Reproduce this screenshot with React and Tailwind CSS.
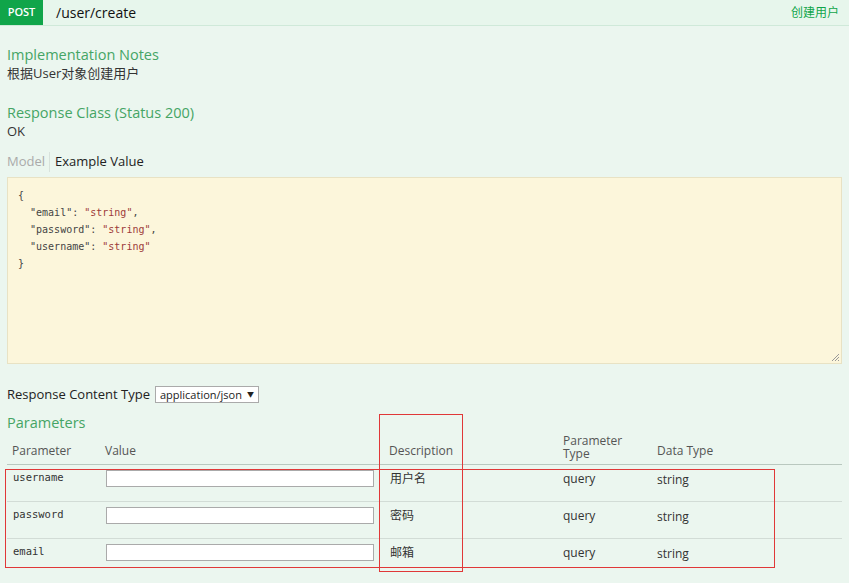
import React from "react"

const font = { fontFamily: '"Open Sans", "Noto Sans CJK SC", sans-serif' }

const params = [
    { name: "username", desc: "用户名" },
    { name: "password", desc: "密码" },
    { name: "email", desc: "邮箱" },
]

function Str({ children }) {
    return <span className="text-[#9c3a3a]">{children}</span>
}

export default function App() {
    return (
        <div className="relative w-[849px] h-[583px] overflow-hidden bg-[#ebf6ef] text-[#222]" style={font}>
            {/* header bar */}
            <div className="flex items-center h-[26px] bg-[#e7f6ec] border-b border-[#cfe9d9]">
                <div className="flex items-center justify-center w-[43px] h-[25px] bg-[#10a54a] text-white text-[11px] font-semibold">POST</div>
                <div className="ml-[13px] text-[14px] text-[#111]">/user/create</div>
                <div className="ml-auto mr-[10px] text-[12px] text-[#10a54a]">创建用户</div>
            </div>

            <div className="px-[7px]">
                <div className="mt-[19px] text-[14.5px] leading-[20px] text-[#45a565]">Implementation Notes</div>
                <div className="text-[13px] leading-[16px] text-[#333]">根据User对象创建用户</div>

                <div className="mt-[22px] text-[14.5px] leading-[20px] text-[#45a565]">Response Class (Status 200)</div>
                <div className="text-[13px] leading-[17px] text-[#333]">OK</div>

                <div className="flex items-center mt-[12px] h-[20px] text-[13px]">
                    <span className="text-[#aaa] pr-[4px]">Model</span>
                    <span className="h-[20px] border-l border-[#d8e2dc]"></span>
                    <span className="pl-[5px] text-[#222]">Example Value</span>
                </div>

                {/* example value box */}
                <div className="relative mt-[5px] h-[187px] bg-[#fcf6db] border border-[#e8e2c4]">
                    <pre className="pt-[9px] pl-[10px] text-[10px] leading-[17px] text-[#444]" style={{ fontFamily: '"DejaVu Sans Mono", monospace' }}>
{"{\n"}
{"  \"email\": "}<Str>"string"</Str>{",\n"}
{"  \"password\": "}<Str>"string"</Str>{",\n"}
{"  \"username\": "}<Str>"string"</Str>{"\n"}
{"}"}
                    </pre>
                    <svg className="absolute right-[1px] bottom-[1px]" width="9" height="9" viewBox="0 0 9 9">
                        <path d="M8 1 L1 8 M8 4 L4 8 M8 7 L7 8" stroke="#999" strokeWidth="1" />
                    </svg>
                </div>

                <div className="flex items-center mt-[21px] text-[13px]">
                    <span>Response Content Type</span>
                    <div className="ml-[5px] flex items-center h-[17px] px-[4px] bg-white border border-[#aaa] text-[11px]">
                        application/json <span className="ml-[5px] text-[7px]">▼</span>
                    </div>
                </div>

                <div className="mt-[8px] text-[14.5px] leading-[20px] text-[#45a565]">Parameters</div>

                {/* parameters table */}
                <div>
                    <div className="grid grid-cols-[93px_284px_174px_94px_1fr] h-[32px] border-b border-[#b9c8bf] text-[12px] text-[#555]">
                        <div className="pl-[5px] pt-[9px]">Parameter</div>
                        <div className="pl-[5px] pt-[9px]">Value</div>
                        <div className="pl-[5px] pt-[9px]">Description</div>
                        <div className="pl-[5px] pt-[1px] leading-[13px]">Parameter<br />Type</div>
                        <div className="pl-[5px] pt-[9px]">Data Type</div>
                    </div>
                    {params.map((p, i) => (
                        <div key={p.name} className={"grid grid-cols-[93px_284px_174px_94px_1fr] h-[37px] pt-[5px] " + (i < 2 ? "border-b border-[#d2dcd6]" : "")}>
                            <div className="pl-[6px] text-[10.5px] text-[#333]" style={{ fontFamily: '"DejaVu Sans Mono", monospace' }}>{p.name}</div>
                            <div className="pl-[6px]">
                                <div className="w-[268px] h-[17px] bg-white border border-[#aaa]"></div>
                            </div>
                            <div className="pl-[6px] text-[12px] text-[#333]">{p.desc}</div>
                            <div className="pl-[5px] text-[12px] text-[#333]">query</div>
                            <div className="pl-[5px] pt-[1px] text-[12px] text-[#333]">string</div>
                        </div>
                    ))}
                </div>
            </div>

            {/* red annotation boxes */}
            <div className="absolute left-[379px] top-[414px] w-[84px] h-[158px] border border-[#e03838]"></div>
            <div className="absolute left-[5px] top-[469px] w-[770px] h-[99px] border border-[#e03838]"></div>
        </div>
    )
}
